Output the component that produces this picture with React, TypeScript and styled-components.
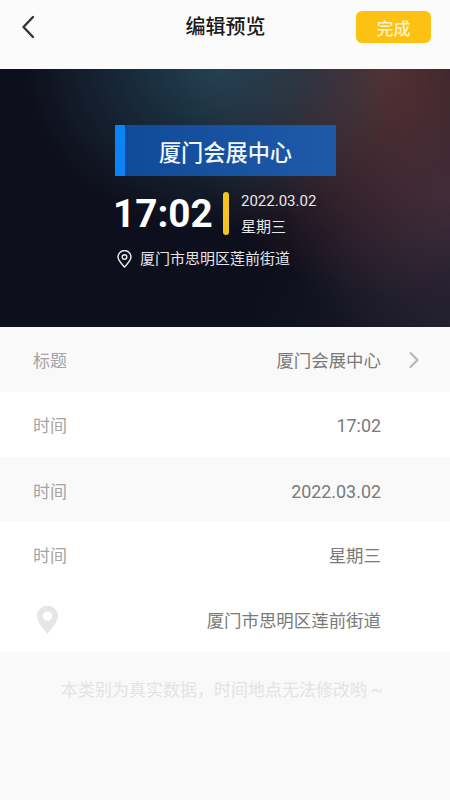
import styled, { createGlobalStyle } from 'styled-components'

const GlobalStyle = createGlobalStyle`
  html, body {
    margin: 0;
    padding: 0;
    background: #f9f9f9;
  }
  * {
    box-sizing: border-box;
  }
`

const cjk = `Roboto, 'Noto Sans CJK SC', sans-serif`

const Page = styled.div`
  width: 450px;
  height: 800px;
  overflow: hidden;
  background: #f9f9f9;
  font-family: ${cjk};
`

const Header = styled.header`
  height: 69px;
  padding: 0 19px 15px 21px;
  background: #fbfbfb;
  display: grid;
  grid-template-columns: 1fr auto 1fr;
  align-items: center;
`

const BackButton = styled.button`
  width: 14px;
  height: 24px;
  padding: 0;
  border: 0;
  background: none;
  display: flex;
  justify-self: start;
`

const HeaderTitle = styled.h1`
  margin: 0 1px 0 0;
  font-size: 20px;
  line-height: 28px;
  font-weight: 500;
  color: #1a1a1a;
`

const DoneButton = styled.button`
  justify-self: end;
  width: 75px;
  height: 32px;
  padding: 0;
  border: 0;
  border-radius: 6px;
  background: #fdc112;
  color: #fdf3d3;
  font-family: ${cjk};
  font-size: 17px;
  font-weight: 500;
`

const Banner = styled.section`
  height: 258px;
  padding: 56px 0 0 115px;
  background:
    radial-gradient(ellipse 190px 170px at 215px -10px, rgba(38, 78, 98, 0.8), rgba(38, 78, 98, 0) 100%),
    radial-gradient(ellipse 210px 230px at 385px 0, rgba(100, 55, 55, 0.8), rgba(100, 55, 55, 0) 100%),
    radial-gradient(ellipse 170px 170px at 450px 130px, rgba(70, 52, 72, 0.65), rgba(70, 52, 72, 0) 100%),
    radial-gradient(ellipse 200px 120px at 450px 258px, rgba(42, 42, 54, 0.5), rgba(42, 42, 54, 0) 100%),
    #0e0f1c;
`

const PlaceTag = styled.div`
  width: 221px;
  height: 51px;
  border-left: 10px solid #0a84f5;
  background: linear-gradient(90deg, #104a98, #1f5aa8);
  color: #f2f6fb;
  font-size: 22.2px;
  font-weight: 500;
  display: flex;
  align-items: center;
  justify-content: center;
  padding-right: 10px;
`

const TimeRow = styled.div`
  margin-top: 16px;
  display: flex;
  align-items: center;
  height: 43px;
`

const BigTime = styled.div`
  flex: 0 0 110px;
  margin-left: -2px;
  font-size: 38.7px;
  font-weight: 700;
  line-height: 43px;
  color: #fff;
`

const Divider = styled.div`
  width: 6px;
  height: 43px;
  margin: 0 12px 0 0;
  border-radius: 3px;
  background: #f5c31d;
`

const DateStack = styled.div`
  color: #e8e8ea;
  font-size: 15px;
  display: flex;
  flex-direction: column;
  gap: 4px;
  line-height: 22px;
`

const PlaceRow = styled.div`
  margin-top: 13px;
  display: flex;
  align-items: center;
  gap: 8px;
  color: #e4e4e6;
  font-size: 15px;
  line-height: 22px;
  padding-left: 2px;
`

const Row = styled.div<{ $height: number; $shade?: boolean; $low?: boolean }>`
  height: ${({ $height }) => $height}px;
  padding: ${({ $low }) => ($low ? '2px' : '0')} 69px 0 33px;
  background: ${({ $shade }) => ($shade ? '#f9f9f9' : '#fff')};
  display: flex;
  align-items: center;
  justify-content: space-between;
  position: relative;
`

const Label = styled.span`
  font-size: 17px;
  color: #a4a4a4;
`

const Value = styled.span`
  font-size: 17.45px;
  color: #7a7a7a;
`

const NumberValue = styled(Value)`
  font-size: 17.9px;
  margin-top: 2px;
`

const Chevron = styled.svg`
  position: absolute;
  right: 31px;
  top: 50%;
  margin-top: -9px;
`

const PinIcon = styled.svg`
  margin-left: 4px;
`

const Hint = styled.p`
  margin: 26px 0 0 61px;
  font-size: 17px;
  line-height: 24px;
  color: #e3e3e3;
`

const App = () => {
  return (
    <Page>
      <GlobalStyle />
      <Header>
        <BackButton aria-label="返回">
          <svg width="14" height="24" viewBox="0 0 14 24" fill="none">
            <path d="M12 2 L2.5 12 L12 22" stroke="#333" strokeWidth="2.4" strokeLinecap="round" strokeLinejoin="round" />
          </svg>
        </BackButton>
        <HeaderTitle>编辑预览</HeaderTitle>
        <DoneButton>完成</DoneButton>
      </Header>
      <Banner>
        <PlaceTag>厦门会展中心</PlaceTag>
        <TimeRow>
          <BigTime>17:02</BigTime>
          <Divider />
          <DateStack>
            <span>2022.03.02</span>
            <span>星期三</span>
          </DateStack>
        </TimeRow>
        <PlaceRow>
          <svg width="15" height="18" viewBox="0 0 15 18" fill="none">
            <path
              d="M7.5 17 C4.5 13.6 1 10.4 1 7 A6.5 6.5 0 0 1 14 7 C14 10.4 10.5 13.6 7.5 17 Z"
              stroke="#eee"
              strokeWidth="1.4"
              strokeLinejoin="round"
            />
            <circle cx="7.5" cy="7" r="2.3" stroke="#eee" strokeWidth="1.4" />
          </svg>
          <span>厦门市思明区莲前街道</span>
        </PlaceRow>
      </Banner>
      <div>
        <Row $height={65} $shade>
          <Label>标题</Label>
          <Value>厦门会展中心</Value>
          <Chevron width="10" height="18" viewBox="0 0 10 18" fill="none">
            <path d="M1.5 2 L8.5 9 L1.5 16" stroke="#b4b4b4" strokeWidth="2" strokeLinecap="round" strokeLinejoin="round" />
          </Chevron>
        </Row>
        <Row $height={65}>
          <Label>时间</Label>
          <NumberValue>17:02</NumberValue>
        </Row>
        <Row $height={64} $shade $low>
          <Label>时间</Label>
          <NumberValue>2022.03.02</NumberValue>
        </Row>
        <Row $height={66}>
          <Label>时间</Label>
          <Value>星期三</Value>
        </Row>
        <Row $height={65}>
          <PinIcon width="21" height="30" viewBox="0 0 22 30">
            <path
              fillRule="evenodd"
              fill="#e6e6e6"
              d="M11 0 C17 0 22 4.6 22 10.6 C22 17.5 15 24 11 30 C7 24 0 17.5 0 10.6 C0 4.6 5 0 11 0 Z M11 6 A5 5 0 1 0 11 16 A5 5 0 1 0 11 6 Z"
            />
          </PinIcon>
          <Value>厦门市思明区莲前街道</Value>
        </Row>
      </div>
      <Hint>本类别为真实数据，时间地点无法修改哟 ~</Hint>
    </Page>
  )
}

export default App
